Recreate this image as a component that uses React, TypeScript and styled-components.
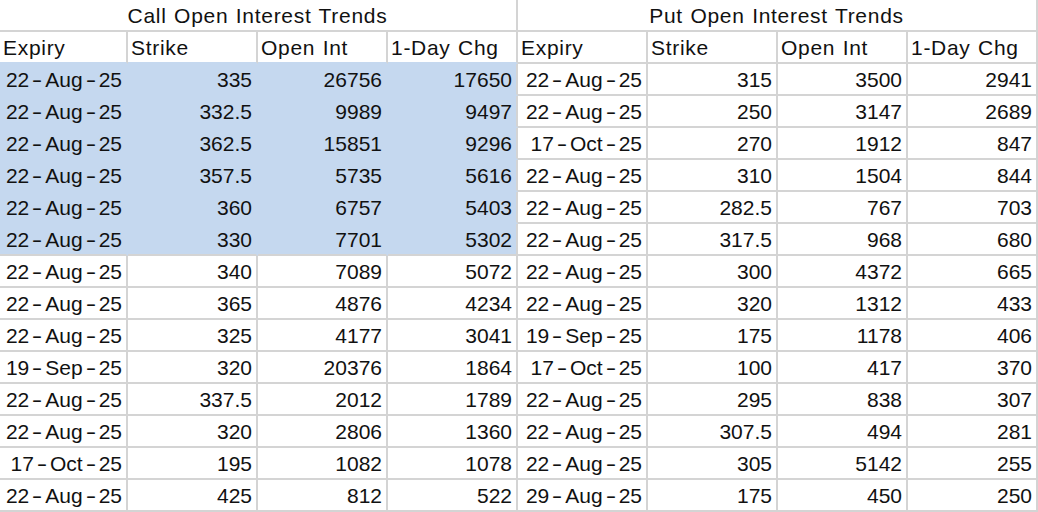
import React from "react";
import styled, { createGlobalStyle } from "styled-components";

const Global = createGlobalStyle`
  html, body { margin: 0; padding: 0; background: #ffffff; }
  body { font-family: "Liberation Sans", Arial, sans-serif; }
`;

const LINE = "#d4d4d4";
const SEL = "#c5d8ef";

const Sheet = styled.div`
  display: grid;
  grid-template-columns: 128px repeat(7, 130px);
  grid-auto-rows: 32px;
  width: 1038px;
  font-family: "Liberation Sans", Arial, sans-serif;
  font-size: 21px;
  color: #111;
`;

const Cell = styled.div<{
  $align?: "left" | "right" | "center";
  $span?: number;
  $sel?: boolean;
  $selRight?: boolean;
  $selBottom?: boolean;
  $label?: boolean;
}>`
  box-sizing: border-box;
  grid-column: span ${(p) => p.$span ?? 1};
  display: flex;
  align-items: center;
  justify-content: ${(p) =>
    p.$align === "right" ? "flex-end" : p.$align === "center" ? "center" : "flex-start"};
  padding: 2px 4px 0 3px;
  white-space: nowrap;
  overflow: hidden;
  letter-spacing: ${(p) => (p.$label ? "0.7px" : "0")};
  word-spacing: ${(p) => (p.$label ? "1px" : "0")};
  background: ${(p) => (p.$sel ? SEL : "#ffffff")};
  border-right: 2px solid ${(p) => (p.$selRight ? SEL : LINE)};
  border-bottom: 2px solid ${(p) => (p.$selBottom ? SEL : LINE)};
`;

const Dash = styled.span`
  display: inline-block;
  width: 16px;
  text-align: center;
  transform: scaleX(1.5);
`;

type Row = [string, string, string, string];

const calls: Row[] = [
  ["22-Aug-25", "335", "26756", "17650"],
  ["22-Aug-25", "332.5", "9989", "9497"],
  ["22-Aug-25", "362.5", "15851", "9296"],
  ["22-Aug-25", "357.5", "5735", "5616"],
  ["22-Aug-25", "360", "6757", "5403"],
  ["22-Aug-25", "330", "7701", "5302"],
  ["22-Aug-25", "340", "7089", "5072"],
  ["22-Aug-25", "365", "4876", "4234"],
  ["22-Aug-25", "325", "4177", "3041"],
  ["19-Sep-25", "320", "20376", "1864"],
  ["22-Aug-25", "337.5", "2012", "1789"],
  ["22-Aug-25", "320", "2806", "1360"],
  ["17-Oct-25", "195", "1082", "1078"],
  ["22-Aug-25", "425", "812", "522"],
];

const puts: Row[] = [
  ["22-Aug-25", "315", "3500", "2941"],
  ["22-Aug-25", "250", "3147", "2689"],
  ["17-Oct-25", "270", "1912", "847"],
  ["22-Aug-25", "310", "1504", "844"],
  ["22-Aug-25", "282.5", "767", "703"],
  ["22-Aug-25", "317.5", "968", "680"],
  ["22-Aug-25", "300", "4372", "665"],
  ["22-Aug-25", "320", "1312", "433"],
  ["19-Sep-25", "175", "1178", "406"],
  ["17-Oct-25", "100", "417", "370"],
  ["22-Aug-25", "295", "838", "307"],
  ["22-Aug-25", "307.5", "494", "281"],
  ["22-Aug-25", "305", "5142", "255"],
  ["29-Aug-25", "175", "450", "250"],
];

const headers = ["Expiry", "Strike", "Open Int", "1-Day Chg"];
const SEL_ROWS = 6;

function DateText({ value }: { value: string }) {
  const parts = value.split("-");
  return (
    <span>
      {parts.map((p, i) => (
        <React.Fragment key={i}>
          {i > 0 && <Dash>-</Dash>}
          {p}
        </React.Fragment>
      ))}
    </span>
  );
}

function renderValue(v: string, i: number) {
  return i === 0 ? <DateText value={v} /> : v;
}

export default function App() {
  return (
    <>
      <Global />
      <Sheet>
        <Cell $span={4} $align="center" $label>Call Open Interest Trends</Cell>
        <Cell $span={4} $align="center" $label>Put Open Interest Trends</Cell>
        {[...headers, ...headers].map((h, i) => (
          <Cell key={`h${i}`} $label $selBottom={i < 4}>{h}</Cell>
        ))}
        {calls.map((c, r) => {
          const sel = r < SEL_ROWS;
          return (
            <React.Fragment key={r}>
              {c.map((v, i) => (
                <Cell
                  key={`c${i}`}
                  $align="right"
                  $sel={sel}
                  $selRight={sel && i < 3}
                  $selBottom={sel && r < SEL_ROWS - 1}
                >
                  {renderValue(v, i)}
                </Cell>
              ))}
              {puts[r].map((v, i) => (
                <Cell key={`p${i}`} $align="right">
                  {renderValue(v, i)}
                </Cell>
              ))}
            </React.Fragment>
          );
        })}
      </Sheet>
    </>
  );
}
